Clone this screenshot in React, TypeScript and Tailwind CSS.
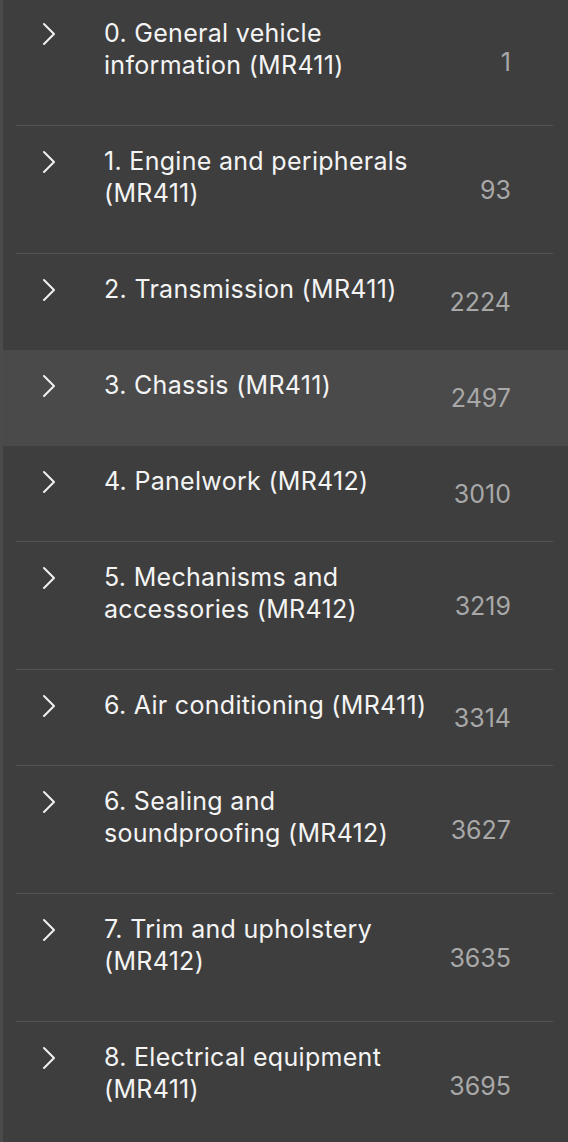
import React from "react";

const items = [
  { title: ["0. General vehicle", "information (MR411)"], n: "1" },
  { title: ["1. Engine and peripherals", "(MR411)"], n: "93" },
  { title: ["2. Transmission (MR411)"], n: "2224" },
  { title: ["3. Chassis (MR411)"], n: "2497", active: true },
  { title: ["4. Panelwork (MR412)"], n: "3010" },
  { title: ["5. Mechanisms and", "accessories (MR412)"], n: "3219" },
  { title: ["6. Air conditioning (MR411)"], n: "3314" },
  { title: ["6. Sealing and", "soundproofing (MR412)"], n: "3627" },
  { title: ["7. Trim and upholstery", "(MR412)"], n: "3635" },
  { title: ["8. Electrical equipment", "(MR411)"], n: "3695" },
];

function Chevron() {
  return (
    <svg width="14" height="24" viewBox="0 0 14 24" fill="none" className="shrink-0">
      <path d="M2 2 L12 12 L2 22" stroke="#f0f0f0" strokeWidth="2" strokeLinecap="round" strokeLinejoin="round" />
    </svg>
  );
}

export default function App() {
  return (
    <div
      className="w-[568px] h-[1142px] overflow-hidden bg-[#3e3e3e] flex"
      style={{ fontFamily: "Inter, 'Noto Sans', sans-serif" }}
    >
      <div className="w-[3px] shrink-0 bg-[#4b4b4b]" />
      <div className="flex-1 flex flex-col -mt-[2px]">
        {items.map((it, i) => {
          const hideSep = it.active || items[i + 1]?.active;
          return (
            <div key={i} className={it.active ? "bg-[#4a4a4a]" : ""}>
              <div className="relative flex items-center pl-[13px] pr-[15px]">
                <div className="flex-1 flex items-start pt-[19px] pb-[44px]">
                  <div className="w-[26px] ml-[26px] pt-[5px]">
                    <Chevron />
                  </div>
                  <div className="ml-[36px] text-[25px] leading-[32px] text-[#f4f4f4] tracking-[0.3px]">
                    {it.title.map((t, j) => (
                      <div key={j}>{t}</div>
                    ))}
                  </div>
                </div>
                <div className="absolute right-[57px] top-[2px] bottom-0 flex items-center text-[25px] text-[#a8a8a8]">
                  {it.n}
                </div>
              </div>
              <div className={hideSep ? "ml-[13px] mr-[15px] h-px" : "ml-[13px] mr-[15px] h-px bg-[#545454]"} />
            </div>
          );
        })}
      </div>
    </div>
  );
}
